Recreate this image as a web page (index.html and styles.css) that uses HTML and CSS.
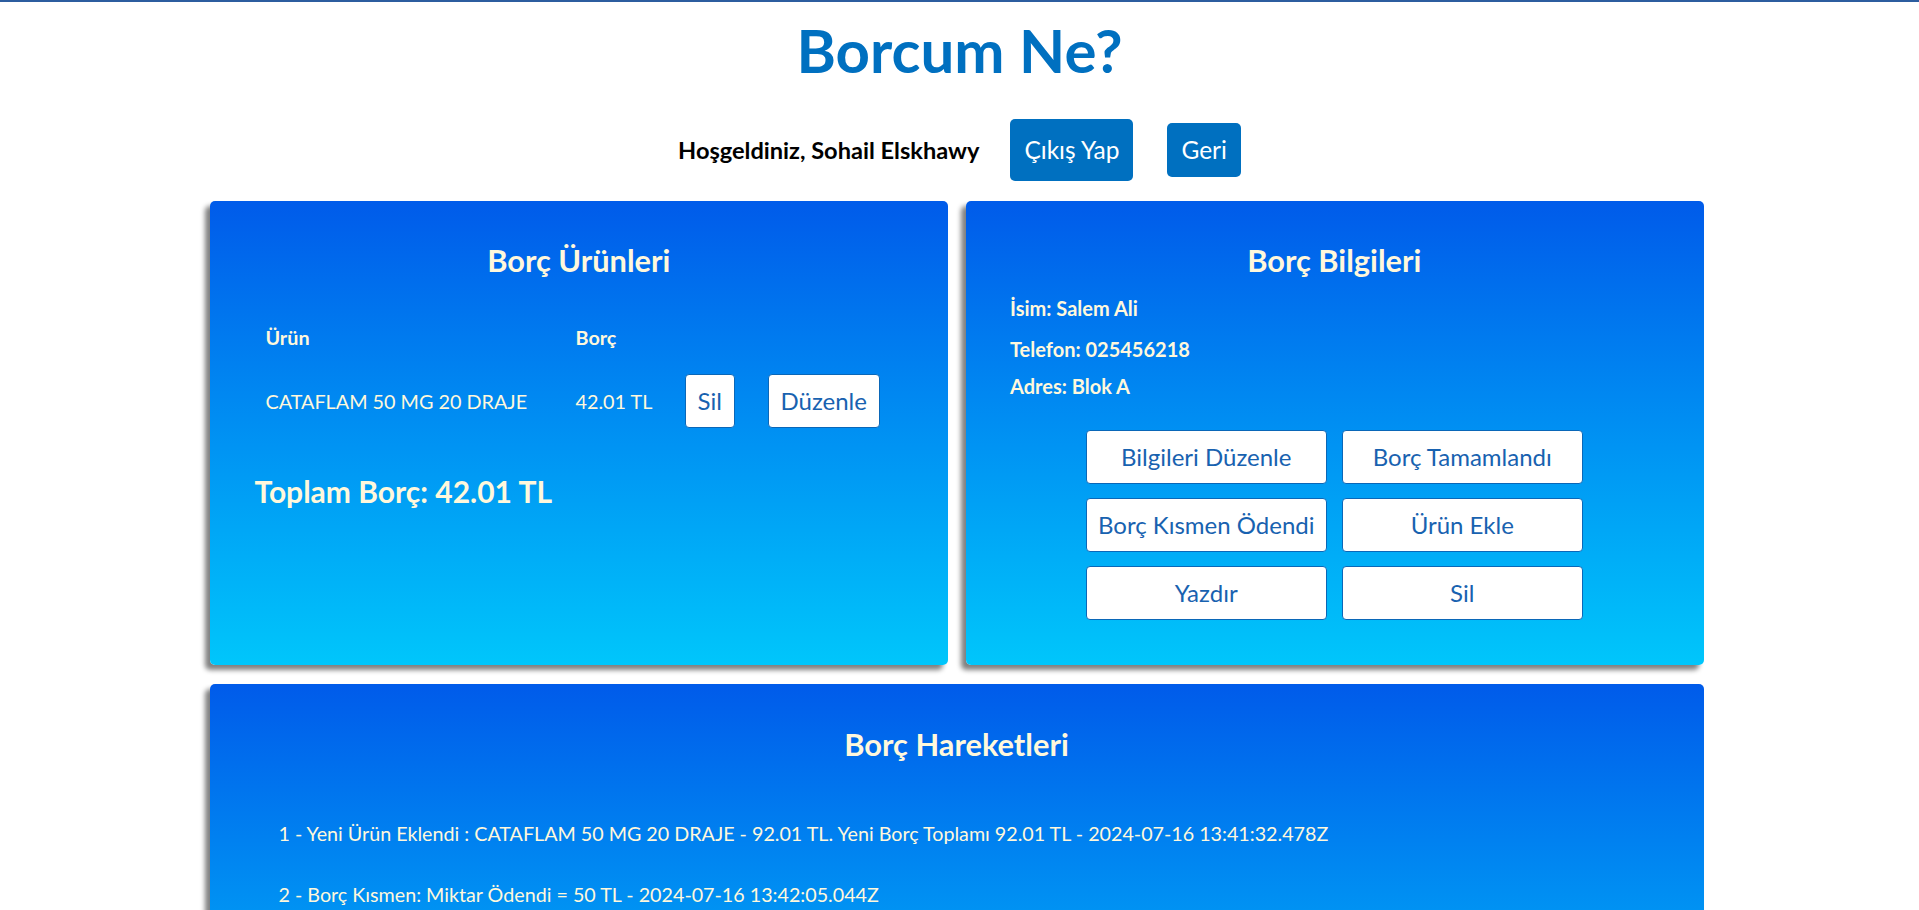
FILE: index.html
```html
<!DOCTYPE html>
<html lang="tr">
<head>
<meta charset="utf-8">
<title>Borcum Ne?</title>
<link rel="stylesheet" href="styles.css">
</head>
<body>
<h1 class="title">Borcum Ne?</h1>
<div class="userbar">
  <span class="welcome">Hoşgeldiniz, Sohail Elskhawy</span>
  <button class="btn-primary btn-logout">Çıkış Yap</button>
  <button class="btn-primary btn-back">Geri</button>
</div>
<div class="cards">
  <section class="card card-products">
    <h2 class="card-title">Borç Ürünleri</h2>
    <div class="items-table">
      <div class="th">Ürün</div>
      <div class="th">Borç</div>
      <div class="th"></div>
      <div class="th"></div>
      <div class="td">CATAFLAM 50 MG 20 DRAJE</div>
      <div class="td">42.01 TL</div>
      <div class="td"><button class="btn-light btn-small">Sil</button></div>
      <div class="td"><button class="btn-light btn-small">Düzenle</button></div>
    </div>
    <h2 class="total">Toplam Borç: 42.01 TL</h2>
  </section>
  <section class="card card-info">
    <h2 class="card-title">Borç Bilgileri</h2>
    <p class="info info-name">İsim: Salem Ali</p>
    <p class="info info-phone">Telefon: 025456218</p>
    <p class="info info-address">Adres: Blok A</p>
    <div class="actions">
      <button class="btn-light btn-action">Bilgileri Düzenle</button>
      <button class="btn-light btn-action">Borç Tamamlandı</button>
      <button class="btn-light btn-action">Borç Kısmen Ödendi</button>
      <button class="btn-light btn-action">Ürün Ekle</button>
      <button class="btn-light btn-action">Yazdır</button>
      <button class="btn-light btn-action">Sil</button>
    </div>
  </section>
</div>
<section class="card card-history">
  <h2 class="card-title">Borç Hareketleri</h2>
  <p class="history-item">1 - Yeni Ürün Eklendi : CATAFLAM 50 MG 20 DRAJE - 92.01 TL. Yeni Borç Toplamı 92.01 TL - 2024-07-16 13:41:32.478Z</p>
  <p class="history-item">2 - Borç Kısmen: Miktar Ödendi = 50 TL - 2024-07-16 13:42:05.044Z</p>
</section>
</body>
</html>
```

FILE: styles.css
```css
html, body {
  margin: 0;
  padding: 0;
}
body {
  font-family: Lato, "Open Sans", sans-serif;
  border-top: 2px solid #2c5d9f;
  background: #ffffff;
  color: #000;
}
.title {
  margin: 12px 0 0;
  font-size: 60px;
  line-height: 72px;
  font-weight: 700;
  color: #0070c0;
  text-align: center;
}
.userbar {
  margin-top: 33px;
  display: flex;
  justify-content: center;
  align-items: center;
  height: 62px;
}
.welcome {
  font-size: 23.6px;
  font-weight: 700;
  margin-right: 31px;
}
.btn-primary {
  font-family: Lato, sans-serif;
  font-size: 24.5px;
  line-height: 28px;
  color: #fff;
  background: #0070c0;
  border: none;
  border-radius: 5px;
  padding: 0 14px;
}
.btn-logout {
  height: 62px;
  margin-right: 34px;
}
.btn-back {
  height: 54px;
}
.cards {
  margin-top: 20px;
  margin-left: calc(50% - 750px);
  width: 1494px;
  display: flex;
  gap: 18px;
}
.card {
  box-sizing: border-box;
  background: linear-gradient(to bottom, #005bea, #00c6fb);
  border-radius: 5px;
  box-shadow: -5px 5px 5px #808080;
  color: #fff8dc;
  padding: 42px 45px 45px;
}
.cards .card {
  flex: 1;
  height: 464px;
}
.card-title {
  margin: 0;
  font-size: 30.8px;
  line-height: 1.2;
  font-weight: 700;
  text-align: center;
}
.items-table {
  margin: 45px 0 0 11px;
  display: grid;
  grid-template-columns: 310px 109px 83px auto;
  row-gap: 25px;
  align-items: center;
}
.th {
  font-size: 19.8px;
  font-weight: 700;
  line-height: 24px;
}
.td {
  font-size: 19.8px;
  line-height: 24px;
}
.btn-light {
  font-family: Lato, sans-serif;
  background: #fff;
  color: #1862b0;
  border: 1px solid #0a67b8;
  border-radius: 4px;
  font-size: 24px;
  line-height: 28px;
}
.btn-small {
  height: 54px;
  padding: 0 12px;
}
.total {
  margin: 45px 0 0;
  font-size: 30px;
  line-height: 1.2;
  font-weight: 700;
}
.card-info {
  padding-left: 44px;
}
.info {
  margin: 0;
  font-size: 20px;
  line-height: 24px;
  font-weight: 700;
}
.info-name {
  margin-top: 16px;
}
.info-phone {
  margin-top: 17px;
}
.info-address {
  margin-top: 13px;
}
.actions {
  margin-top: 32px;
  display: grid;
  grid-template-columns: 241px 241px;
  justify-content: center;
  column-gap: 15px;
  row-gap: 14px;
}
.btn-action {
  height: 54px;
  padding: 0;
}
.card-history {
  margin-top: 19px;
  margin-left: calc(50% - 750px);
  width: 1494px;
  min-height: 440px;
  padding-left: 69px;
  padding-top: 43px;
}
.card-history .card-title {
  margin-left: -24px;
}
.history-item {
  margin: 0;
  font-size: 19.7px;
  line-height: 23px;
}
.card-history .card-title + .history-item {
  margin-top: 58px;
}
.history-item + .history-item {
  margin-top: 38px;
}
```
